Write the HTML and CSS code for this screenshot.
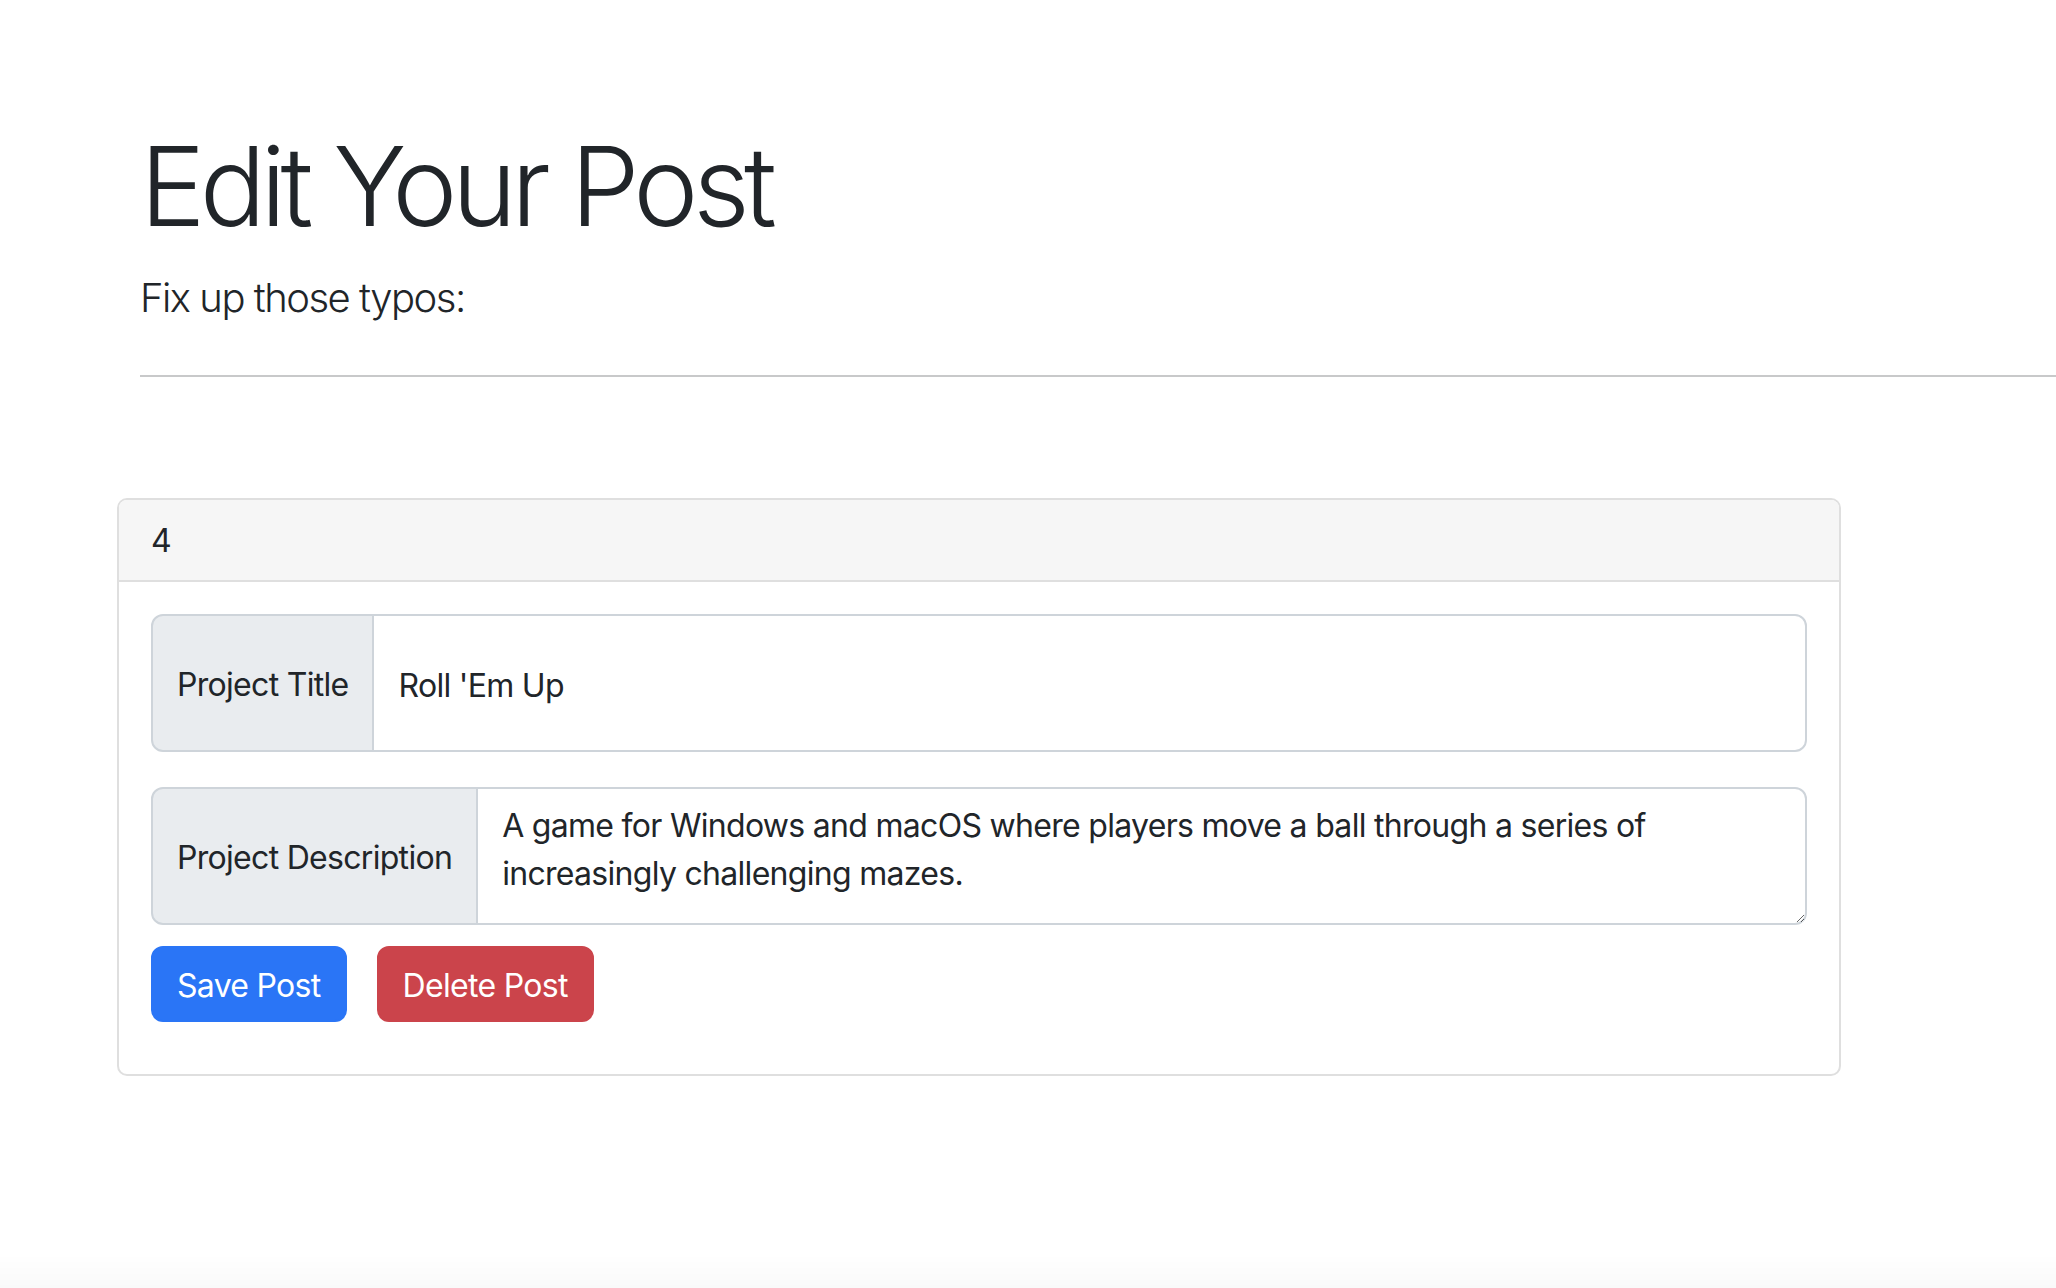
FILE: index.html
```html
<!DOCTYPE html>
<html lang="en">
<head>
<meta charset="utf-8">
<title>Edit Your Post</title>
<link rel="stylesheet" href="styles.css">
</head>
<body>
<header class="intro">
  <h1 class="title">Edit Your Post</h1>
  <p class="lead">Fix up those typos:</p>
  <hr class="rule">
</header>
<main class="card">
  <div class="card-header">4</div>
  <div class="card-body">
    <form class="post-form">
      <div class="input-group">
        <span class="addon">Project Title</span>
        <input class="control" type="text" value="Roll 'Em Up">
      </div>
      <div class="input-group group-desc">
        <span class="addon">Project Description</span>
        <textarea class="control area">A game for Windows and macOS where players move a ball through a series of increasingly challenging mazes.</textarea>
      </div>
      <div class="actions">
        <button type="button" class="btn btn-primary">Save Post</button>
        <button type="button" class="btn btn-danger">Delete Post</button>
      </div>
    </form>
  </div>
</main>
<div class="bottom-fade"></div>
</body>
</html>
```

FILE: styles.css
```css
* { box-sizing: border-box; }

html, body {
  margin: 0;
  padding: 0;
  background: #ffffff;
}

body {
  font-family: "Inter", "Liberation Sans", sans-serif;
  font-size: 32px;
  line-height: 1.5;
  letter-spacing: -0.7px;
  color: #212529;
  width: 2056px;
  height: 1288px;
  overflow: hidden;
}

.intro {
  padding: 120px 0 0 140px;
}

.title {
  margin: 0 0 16px 0;
  font-size: 110px;
  font-weight: 300;
  line-height: 1.2;
  letter-spacing: -5.6px;
}

.lead {
  margin: 0;
  font-size: 40px;
  font-weight: 300;
  line-height: 60px;
  letter-spacing: -1.5px;
}

.rule {
  margin: 47px 0 0 0;
  border: 0;
  border-top: 2px solid #c8c9ca;
  height: 0;
}

.card {
  margin: 121px 0 0 117px;
  width: 1724px;
  border: 2px solid #dfdfdf;
  border-radius: 10px;
  background: #fff;
}

.card-header {
  background: #f6f6f6;
  border-bottom: 2px solid #dfdfdf;
  padding: 17px 32px 15px 32px;
  line-height: 48px;
  border-radius: 8px 8px 0 0;
}

.card-body {
  padding: 32px 32px 52px 32px;
}

.post-form {
  display: flex;
  flex-direction: column;
}

.input-group {
  display: flex;
  align-items: stretch;
  height: 138px;
}

.group-desc {
  margin-top: 35px;
  height: 138px;
}

.addon {
  display: flex;
  align-items: center;
  padding: 3px 24px 0 24px;
  background: #e9ecef;
  border: 2px solid #ced4da;
  border-radius: 12px 0 0 12px;
  white-space: nowrap;
  color: #212529;
}

.control {
  flex: 1;
  margin-left: -2px;
  border: 2px solid #ced4da;
  border-radius: 0 12px 12px 0;
  padding: 15px 24px 9px 24px;
  font-family: inherit;
  font-size: 32px;
  line-height: 48px;
  letter-spacing: -0.7px;
  color: #212529;
  background: #fff;
  outline: none;
}

.area {
  resize: vertical;
  height: 138px;
  padding-top: 13px;
}

.actions {
  display: flex;
  gap: 30px;
  margin-top: 21px;
}

.btn {
  font-family: inherit;
  font-size: 32px;
  line-height: 48px;
  letter-spacing: -0.7px;
  padding: 14px 24px 10px 24px;
  border: 2px solid transparent;
  border-radius: 12px;
  color: #fff;
  cursor: pointer;
}

.btn-primary {
  background: #2a75f6;
  border-color: #2a75f6;
}

.btn-danger {
  background: #cb444b;
  border-color: #cb444b;
}

.bottom-fade {
  position: fixed;
  left: 0;
  right: 0;
  bottom: 0;
  height: 34px;
  background: linear-gradient(to bottom, rgba(0,0,0,0), rgba(0,0,0,0.025));
  pointer-events: none;
}
```
